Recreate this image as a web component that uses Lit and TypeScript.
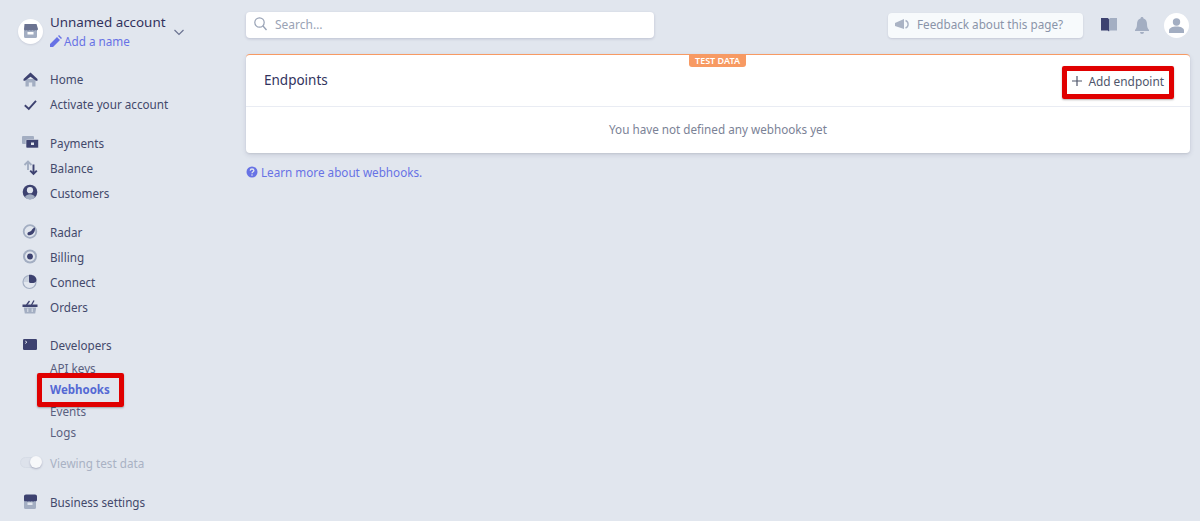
import { LitElement, html, css, svg } from "lit";
import { customElement } from "lit/decorators.js";

const D = "#3d4270";
const L = "#a3aec2";
const BG = "#e1e6ee";

const icons: Record<string, unknown> = {
  home: svg`<path fill="${L}" d="M3.500 8h10v7.500h-3.300V11.500H6.800v4H3.500z"/><path fill="${D}" d="M8.500 1.500 15.500 8v1.800H14L8.500 5.800 3 9.800H1.500V8z"/>`,
  check: svg`<path fill="none" stroke="${D}" stroke-width="1.900" d="M2.800 9.300 6.800 13 14 4.800"/>`,
  payments: svg`<rect x="0" y="2" width="12" height="8" rx="1" fill="${L}"/><rect x="4" y="5.500" width="12.500" height="8.500" rx="1" fill="${D}" stroke="${BG}" stroke-width=".6"/><rect x="9" y="8.500" width="3" height="2.500" fill="${BG}"/>`,
  balance: svg`<path fill="none" stroke="${L}" stroke-width="1.900" d="M6 11V2.500M2.500 6 6 2.500 9.500 6"/><path fill="none" stroke="${D}" stroke-width="1.900" d="M11.500 5.500V15M8.200 11.700 11.500 15l3.300-3.300"/>`,
  customers: svg`<circle cx="8" cy="8" r="7.300" fill="${D}"/><path fill="${L}" d="M2.800 13.200C4 11 6 10.300 8 10.300s4 .7 5.200 2.900A7.300 7.300 0 0 1 2.800 13.200z"/><circle cx="8" cy="6.200" r="3.100" fill="${BG}"/>`,
  radar: svg`<circle cx="8" cy="8.500" r="6.300" fill="none" stroke="${L}" stroke-width="1.800"/><path fill="${D}" d="M13 4.500c.3 3.300-1 7-5 7.800-2.300.4-3.300-1.500-2.100-2.900 1-1 2.500-.6 3.600-2C10.300 6.300 11 4.800 13 4.500z"/>`,
  billing: svg`<circle cx="8" cy="8.500" r="7" fill="${L}"/><circle cx="8" cy="8.500" r="5" fill="${BG}"/><circle cx="8" cy="8.500" r="2.900" fill="${D}"/>`,
  connect: svg`<circle cx="7.500" cy="9" r="6.500" fill="none" stroke="${L}" stroke-width="1.200"/><path fill="${L}" d="M7 9H1a6.500 6.500 0 0 1 6-6.400z" opacity=".35"/><path fill="${D}" d="M7 1.800c4-.5 7.500 1.800 7.500 5.300 0 1.700-1.600 2.900-3.200 2.900H8.600A1.600 1.600 0 0 1 7 8.400z"/>`,
  orders: svg`<path fill="${D}" d="M.5 6.500h15v2.500H.5z"/><path fill="none" stroke="${D}" stroke-width="1.300" d="M4.500 7 7.500 3M9.500 7l2.500-4.500"/><path fill="${L}" d="M1.800 9.500h12.400l-1 6H2.800z"/><path stroke="${BG}" d="M5.800 10.500v3.500M10.200 10.500v3.500"/>`,
  developers: svg`<rect x="1" y="2" width="14" height="11" rx="1.200" fill="${D}"/><path fill="none" stroke="${BG}" stroke-width=".9" d="M3.200 4 5 5.200 3.200 6.500"/>`,
  business: svg`<path fill="${L}" d="M2 6h12v8.500A1.500 1.500 0 0 1 12.500 16h-9A1.500 1.500 0 0 1 2 14.500z"/><path fill="${D}" d="M3 1.500h10c1.200 0 2 .8 2 2V7c0 1.200-1.500 1.600-2.300 1-.9.700-2.100.7-2.900 0-.8.700-2 .7-2.800 0-.8.700-2 .7-2.800 0-.9.600-2.200.2-2.200-1V3.500c0-1.200.8-2 2-2z"/><rect x="5.500" y="9.500" width="5" height="2.500" fill="${BG}"/>`,
};

const ico = (n: string) => html`<svg class="ni" viewBox="0 0 17 17" width="17" height="17">${icons[n]}</svg>`;

@customElement("app-root")
export class AppRoot extends LitElement {
  static styles = css`
    :host { display: block; width: 1200px; height: 521px; overflow: hidden; background: #e1e6ee; color: #3d4270;
      font-family: "Noto Sans", "Open Sans", sans-serif; font-size: 11.700px; }
    .app { display: flex; height: 521px; }
    .side { width: 246px; flex: none; box-sizing: border-box; padding: 12px 0 0 18px; }
    .acct { display: flex; align-items: center; height: 38px; }
    .ava { width: 25px; height: 25px; border-radius: 50%; background: #fff; display: flex; align-items: center; justify-content: center; margin-right: 7px; flex: none; box-shadow: 0 1px 2px rgba(50,50,93,.12); }
    .names { width: 124px; }
    .name { font-size: 13.400px; line-height: 20px; color: #32325d; white-space: nowrap; }
    .addn { display: flex; align-items: center; gap: 2px; line-height: 18px; color: #6772e5; white-space: nowrap; }
    .nav { margin-top: 16.500px; margin-left: 4px; }
    .group { margin-bottom: 13.800px; }
    .row { display: flex; align-items: center; height: 25px; white-space: nowrap; color: #43496b; }
    .ni { flex: none; margin-right: 11px; }
    .sub { padding-left: 28px; height: 21.300px; display: flex; align-items: center; color: #5a607f; }
    .sub.on { color: #5469d4; font-weight: 700; font-size: 11.500px; }
    .subs { margin-top: -.5px; margin-bottom: 8.100px; }
    .toggle { display: flex; align-items: center; height: 24px; color: #a9b2c4; margin-bottom: 14.500px; white-space: nowrap; margin-left: -2px; }
    .track { width: 21px; height: 11px; border-radius: 6px; background: #dde2eb; position: relative; margin-right: 9px; border: 1px solid #d6dce6; box-sizing: border-box; }
    .knob { position: absolute; right: -2px; top: -2px; width: 12px; height: 12px; border-radius: 50%; background: #f7f8fa; box-shadow: 0 1px 2px rgba(50,50,93,.3); }
    .main { flex: 1; padding: 12px 10px 0 0; min-width: 0; }
    .top { display: flex; align-items: center; height: 26px; }
    .search { width: 408px; height: 26px; box-sizing: border-box; background: #fff; border-radius: 4px; box-shadow: 0 1px 3px rgba(50,50,93,.2); display: flex; align-items: center; padding: 0 0 2px 8px; gap: 8px; color: #9aa3b5; font-size: 12px; }
    .fb { margin-left: 234px; width: 195px; height: 25px; box-sizing: border-box; background: #f7fafc; border-radius: 4px; box-shadow: 0 1px 2px rgba(50,50,93,.15); display: flex; align-items: center; padding: 0 0 2px 7px; gap: 7px; color: #8a94a9; }
    .book { margin-left: 18px; }
    .bell { margin-left: 18px; }
    .me { margin-left: 15px; width: 25px; height: 25px; border-radius: 50%; background: #fff; display: flex; align-items: center; justify-content: center; }
    .card { margin-top: 16px; background: #fff; border-radius: 4px; border-top: 1px solid #f79a63; box-shadow: 0 2px 5px rgba(50,50,93,.13), 0 1px 2px rgba(0,0,0,.07); position: relative; }
    .badge { position: absolute; left: 443px; top: 0; width: 57px; height: 12px; background: #f79a63; color: #fff; font-size: 9px; font-weight: 600; line-height: 12px; text-align: center; border-radius: 0 0 3px 3px; }
    .chead { height: 51px; display: flex; align-items: center; justify-content: space-between; border-bottom: 1px solid #e9ecf3; padding: 0 26px 0 18px; }
    .title { font-size: 13.500px; color: #32325d; margin-bottom: 2px; }
    .add { display: flex; align-items: center; gap: 6px; color: #4f566b; font-size: 11.850px; }
    .empty { height: 46px; display: flex; align-items: center; justify-content: center; color: #7b8296; padding-bottom: 2px; box-sizing: border-box; }
    .learn { margin-top: 11px; display: flex; align-items: center; gap: 3px; color: #6772e5; line-height: 16px; }
    .mark { position: absolute; box-sizing: border-box; border: 5px solid #e00000; border-radius: 2px; box-shadow: 0 1px 2px rgba(0,0,0,.3); }
    .m1 { left: 37px; top: 373px; width: 87px; height: 34px; }
    .m2 { left: 1062px; top: 66px; width: 112px; height: 33px; }
  `;

  private row(icon: string, label: string) {
    return html`<div class="row">${ico(icon)}<span>${label}</span></div>`;
  }

  render() {
    return html`
      <div class="app">
        <aside class="side">
          <div class="acct">
            <div class="ava">
              <svg width="15" height="14" viewBox="0 0 15 14"><path fill="#a3aec2" d="M1 5h13v7.500a1.500 1.500 0 0 1-1.500 1.500h-10A1.500 1.500 0 0 1 1 12.500z"/><path fill="#6b7391" d="M1.500 0h12l1.500 5c0 1.300-1.700 1.800-2.500 1-.8.800-2.200.8-3 0-.8.800-2.200.8-3 0-.8.800-2.200.8-3 0-.8.800-2.500.3-2.500-1z"/><rect x="4.500" y="8" width="6" height="2.500" fill="#fff"/></svg>
            </div>
            <div class="names">
              <div class="name">Unnamed account</div>
              <div class="addn"><svg width="12" height="12" viewBox="0 0 12 12"><path fill="#6772e5" d="M0 12V9l7-7 3 3-7 7zM8 1l1-1 3 3-1 1z"/></svg><span>Add a name</span></div>
            </div>
            <svg width="10" height="7" viewBox="0 0 10 7" style="margin-top:2px"><path fill="none" stroke="#6b7391" stroke-width="1.200" d="M.5 1 5 5.500 9.500 1"/></svg>
          </div>
          <div class="nav">
            <div class="group">${this.row("home", "Home")}${this.row("check", "Activate your account")}</div>
            <div class="group">${this.row("payments", "Payments")}${this.row("balance", "Balance")}${this.row("customers", "Customers")}</div>
            <div class="group">${this.row("radar", "Radar")}${this.row("billing", "Billing")}${this.row("connect", "Connect")}${this.row("orders", "Orders")}</div>
            ${this.row("developers", "Developers")}
            <div class="subs">
              <div class="sub"><span>API keys</span></div>
              <div class="sub on"><span>Webhooks</span></div>
              <div class="sub"><span>Events</span></div>
              <div class="sub"><span>Logs</span></div>
            </div>
            <div class="toggle"><div class="track"><div class="knob"></div></div><span>Viewing test data</span></div>
            ${this.row("business", "Business settings")}
          </div>
        </aside>
        <main class="main">
          <div class="top">
            <div class="search">
              <svg width="13" height="14" viewBox="0 0 13 14"><circle cx="5.500" cy="5.500" r="4.700" fill="none" stroke="#98a2b5" stroke-width="1.200"/><path stroke="#98a2b5" stroke-width="1.300" d="M9 9l3.500 4"/></svg>
              <span>Search…</span>
            </div>
            <div class="fb">
              <svg width="15" height="13" viewBox="0 0 15 13"><path fill="#aab3c4" d="M0 5l9-4v10L0 8z"/><path fill="none" stroke="#aab3c4" stroke-width="1.400" d="M10.500 2.500a4 4 0 0 1 0 7.500"/></svg>
              <span>Feedback about this page?</span>
            </div>
            <svg class="book" width="16" height="14" viewBox="0 0 16 14"><path fill="#3d4270" d="M0 0h6c1 0 2 .6 2 1.500V14c0-1-1-1.500-2-1.500H0z"/><path fill="#a3aec2" d="M16 0h-6c-1 0-2 .6-2 1.500V14c0-1 1-1.500 2-1.500h6z"/></svg>
            <svg class="bell" width="14" height="17" viewBox="0 0 14 17"><path fill="#a3aec2" d="M7 0c1 0 1.500.7 1.500 1.500C11 2.300 12 4.500 12 7c0 3 .6 4.500 2 6v1H0v-1c1.400-1.500 2-3 2-6 0-2.500 1-4.700 3.500-5.500C5.500.7 6 0 7 0zM5 15h4a2 2 0 0 1-4 0z"/></svg>
            <div class="me"><svg width="15" height="15" viewBox="0 0 15 15"><circle cx="7.500" cy="4" r="3.700" fill="#a3aec2"/><path fill="#a3aec2" d="M0 15v-2.500C0 10 3.500 8.500 7.500 8.500S15 10 15 12.500V15z"/></svg></div>
          </div>
          <section class="card">
            <div class="badge">TEST DATA</div>
            <div class="chead">
              <div class="title">Endpoints</div>
              <div class="add"><svg width="10" height="10" viewBox="0 0 10 10"><path stroke="#4f566b" stroke-width="1.200" d="M5 0v10M0 5h10"/></svg><span>Add endpoint</span></div>
            </div>
            <div class="empty">You have not defined any webhooks yet</div>
          </section>
          <div class="learn">
            <svg width="12" height="12" viewBox="0 0 12 12"><circle cx="6" cy="6" r="5.500" fill="#6772e5"/><path fill="none" stroke="#e1e6ee" stroke-width="1.300" d="M4.200 4.600C4.300 3.500 5 3 6 3c1.100 0 1.900.6 1.900 1.500C7.900 5.800 6 5.800 6 7.300"/><circle cx="6" cy="9" r=".8" fill="#e1e6ee"/></svg>
            <span>Learn more about webhooks.</span>
          </div>
        </main>
      </div>
      <div class="mark m1"></div>
      <div class="mark m2"></div>
    `;
  }
}
